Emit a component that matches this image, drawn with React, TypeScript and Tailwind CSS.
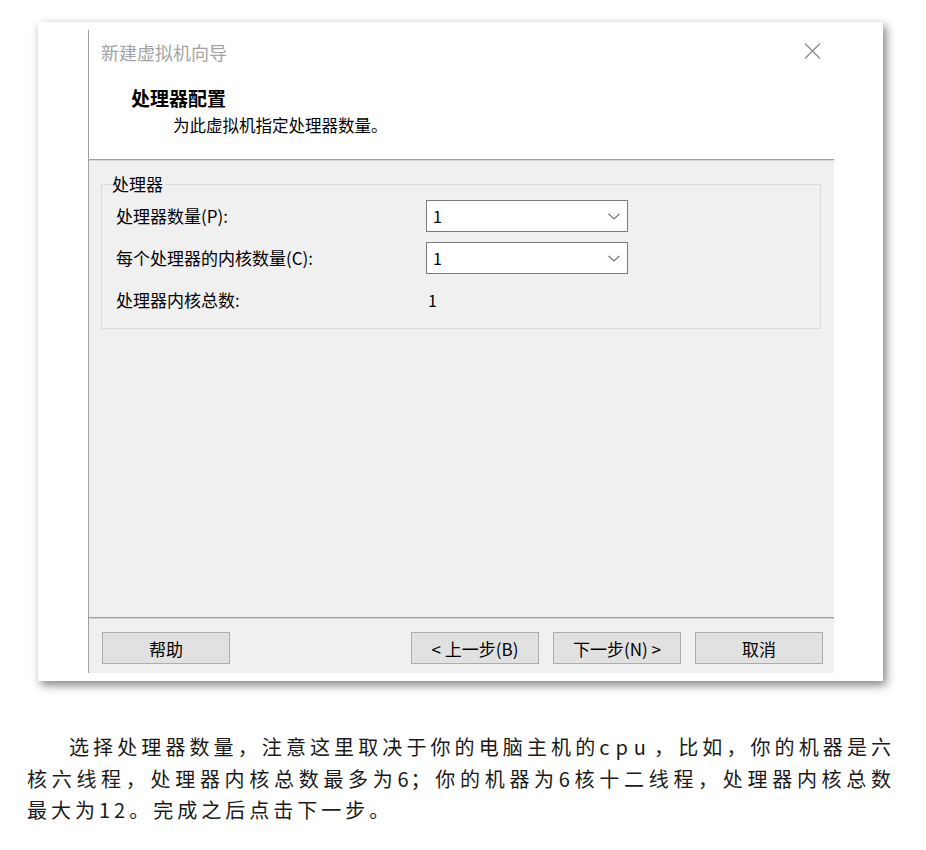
import React from "react";

const cjk = "font-['Noto_Sans_CJK_SC','Microsoft_YaHei',sans-serif]";

function Chevron() {
  return (
    <svg width="12" height="7" viewBox="0 0 12 7" className="block">
      <polyline points="0.5,0.8 6,5.8 11.5,0.8" fill="none" stroke="#5a5a5a" strokeWidth="1.1" />
    </svg>
  );
}

function Select({ value }: { value: string }) {
  return (
    <div className="h-[32px] w-[202px] bg-white border border-[#7a7a7a] flex items-center justify-between pl-[6px] pr-[7px]">
      <span className="text-[16px] leading-none text-black">{value}</span>
      <Chevron />
    </div>
  );
}

function Btn({ children }: { children: React.ReactNode }) {
  return (
    <div className="h-[32px] w-[128px] bg-[#e1e1e1] border border-[#adadad] flex items-center justify-center text-[17px] text-black leading-none">
      {children}
    </div>
  );
}

function Dialog() {
  return (
    <div className={`w-[746px] h-[643px] border-l border-[#a0a0a0] flex flex-col ${cjk}`}>
      <div className="h-[129px] bg-white flex flex-col">
        <div className="flex items-center justify-between h-[24px] mt-[10px] pl-[12px] pr-[13px]">
          <span className="text-[18px] leading-[24px] text-[#a3a3a3]">新建虚拟机向导</span>
          <svg width="17" height="16" viewBox="0 0 17 16" className="block mt-[-2px]">
            <line x1="1" y1="0.5" x2="16" y2="15.5" stroke="#8a8a8a" strokeWidth="1.3" />
            <line x1="16" y1="0.5" x2="1" y2="15.5" stroke="#8a8a8a" strokeWidth="1.3" />
          </svg>
        </div>
        <div className="mt-[21px] pl-[42px] text-[19px] leading-[26px] font-bold text-black">处理器配置</div>
        <div className="mt-[3px] pl-[84px] text-[16.5px] leading-[22px] text-black">为此虚拟机指定处理器数量。</div>
      </div>
      <div className="h-px bg-[#a0a0a0]" />
      <div className="h-px bg-[#d6d6d6]" />
      <div className="h-[456px] bg-[#f0f0f0] pt-[12px] pl-[12px] pr-[13px]">
        <fieldset className="border border-[#dcdcdc] pl-[10px] pr-[10px] pb-[12px]">
          <legend className="pr-[2px] text-[17px] leading-[22px] text-black">处理器</legend>
          <div className="pl-[4px] mt-[5px] grid grid-cols-[310px_202px] gap-y-[10px] text-[17px] text-black">
            <div className="h-[32px] flex items-center">处理器数量(P):</div>
            <Select value="1" />
            <div className="h-[32px] flex items-center">每个处理器的内核数量(C):</div>
            <Select value="1" />
            <div className="h-[32px] flex items-center">处理器内核总数:</div>
            <div className="h-[32px] flex items-center pl-[2px] text-[16px]">1</div>
          </div>
        </fieldset>
      </div>
      <div className="h-px bg-[#a0a0a0]" />
      <div className="h-px bg-[#cfcfcf]" />
      <div className="h-[54px] bg-[#f0f0f0] flex items-start pt-[13px] pl-[13px] pr-[11px]">
        <Btn>帮助</Btn>
        <div className="flex-1" />
        <div className="flex gap-[14px]">
          <Btn>&lt; 上一步(B)</Btn>
          <Btn>下一步(N) &gt;</Btn>
          <Btn>取消</Btn>
        </div>
      </div>
    </div>
  );
}

export default function App() {
  return (
    <div className="w-[926px] min-h-[850px] bg-white pt-[22px]">
      <div className="ml-[38px] w-[845px] h-[659px] bg-white shadow-[3px_4px_9px_rgba(0,0,0,0.5)] pt-[8px] pl-[50px]">
        <Dialog />
      </div>
      <div className={`mt-[50px] ml-[27px] w-[866px] text-[20px] leading-[31.5px] text-[#1a1a1a] ${cjk}`}>
        <div className="text-justify [text-align-last:justify] pl-[42px] tracking-[2px] whitespace-nowrap">选择处理器数量，注意这里取决于你的电脑主机的<span className="tracking-[6px]">cpu</span>，比如，你的机器是六</div>
        <div className="text-justify [text-align-last:justify] tracking-[2px] whitespace-nowrap">核六线程，处理器内核总数最多为6；你的机器为6核十二线程，处理器内核总数</div>
        <div className="tracking-[4px]">最大为12。完成之后点击下一步。</div>
      </div>
    </div>
  );
}
